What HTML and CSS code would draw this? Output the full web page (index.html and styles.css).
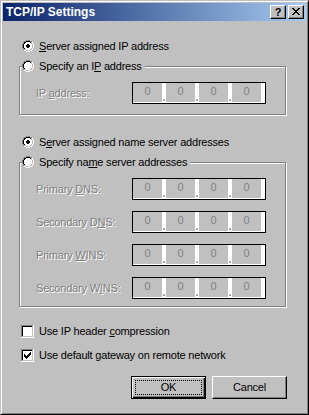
FILE: index.html
```html
<!DOCTYPE html>
<html>
<head>
<meta charset="utf-8">
<title>TCP/IP Settings</title>
<link rel="stylesheet" href="styles.css">
</head>
<body>
<svg class="defs" xmlns="http://www.w3.org/2000/svg">
  <symbol id="rb" viewBox="0 0 12 12">
    <path fill="#fff" d="M4 2h4v1H4zM3 3h6v1H3zM2 4h8v4H2zM3 8h6v1H3zM4 9h4v1H4z"/>
    <path fill="#808080" d="M4 0h4v1H4zM2 1h2v1H2zM8 1h2v1H8zM1 2h1v2H1zM0 4h1v4H0zM1 8h1v2H1z"/>
    <path fill="#fff" d="M10 2h1v2h-1zM11 4h1v4h-1zM10 8h1v2h-1zM2 10h2v1H2zM8 10h2v1H8zM4 11h4v1H4z"/>
    <path fill="#000" d="M4 1h4v1H4zM2 2h2v1H2zM8 2h1v1H8zM2 3h1v1H2zM1 4h1v4H1zM2 8h1v1H2z"/>
    <path fill="#c0c0c0" d="M9 2h1v2H9zM10 4h1v4h-1zM9 8h1v1H9zM2 9h2v1H2zM8 9h2v1H8zM4 10h4v1H4z"/>
  </symbol>
  <symbol id="rbon" viewBox="0 0 12 12">
    <use href="#rb" width="12" height="12"/>
    <path fill="#000" d="M5 4h2v1H5zM4 5h4v2H4zM5 7h2v1H5z"/>
  </symbol>
  <symbol id="cb" viewBox="0 0 13 13">
    <rect width="13" height="13" fill="#fff"/>
    <path fill="#808080" d="M0 0h12v1H1v11H0z"/>
    <path fill="#000" d="M1 1h10v1H2v9H1z"/>
    <path fill="#c0c0c0" d="M11 1h1v11H1v-1h10z"/>
  </symbol>
</svg>

<div class="window">
  <div class="titlebar">
    <span class="title">TCP/IP Settings</span>
    <div class="cbtns">
      <span class="cbtn help">?</span>
      <span class="cbtn close">
        <svg width="8" height="7" viewBox="0 0 8 7" shape-rendering="crispEdges"><path fill="#000" d="M0 0h2v1H0zM6 0h2v1H6zM1 1h2v1H1zM5 1h2v1H5zM2 2h4v1H2zM3 3h2v1H3zM2 4h4v1H2zM1 5h2v1H1zM5 5h2v1H5zM0 6h2v1H0zM6 6h2v1H6z"/></svg>
      </span>
    </div>
  </div>

  <div class="content">
    <div class="opt r1">
      <svg class="radio" viewBox="0 0 12 12" shape-rendering="crispEdges"><use href="#rbon" width="12" height="12"/></svg>
      <span><u>S</u>erver assigned IP address</span>
    </div>

    <div class="group g1">
      <div class="legend">
        <svg class="radio" viewBox="0 0 12 12" shape-rendering="crispEdges"><use href="#rb" width="12" height="12"/></svg>
        <span>Specify an I<u>P</u> address</span>
      </div>
      <div class="field">
        <span class="lbl disabled">IP <u>a</u>ddress:</span>
        <div class="ip"><span class="seg">0</span><span class="dot">.</span><span class="seg">0</span><span class="dot">.</span><span class="seg">0</span><span class="dot">.</span><span class="seg">0</span></div>
      </div>
    </div>

    <div class="opt r3">
      <svg class="radio" viewBox="0 0 12 12" shape-rendering="crispEdges"><use href="#rbon" width="12" height="12"/></svg>
      <span>S<u>e</u>rver assigned name server addresses</span>
    </div>

    <div class="group g2">
      <div class="legend">
        <svg class="radio" viewBox="0 0 12 12" shape-rendering="crispEdges"><use href="#rb" width="12" height="12"/></svg>
        <span>Specify na<u>m</u>e server addresses</span>
      </div>
      <div class="field">
        <span class="lbl disabled">Primary <u>D</u>NS:</span>
        <div class="ip"><span class="seg">0</span><span class="dot">.</span><span class="seg">0</span><span class="dot">.</span><span class="seg">0</span><span class="dot">.</span><span class="seg">0</span></div>
      </div>
      <div class="field">
        <span class="lbl disabled">Secondary D<u>N</u>S:</span>
        <div class="ip"><span class="seg">0</span><span class="dot">.</span><span class="seg">0</span><span class="dot">.</span><span class="seg">0</span><span class="dot">.</span><span class="seg">0</span></div>
      </div>
      <div class="field">
        <span class="lbl disabled">Primary <u>W</u>INS:</span>
        <div class="ip"><span class="seg">0</span><span class="dot">.</span><span class="seg">0</span><span class="dot">.</span><span class="seg">0</span><span class="dot">.</span><span class="seg">0</span></div>
      </div>
      <div class="field">
        <span class="lbl disabled">Secondary W<u>I</u>NS:</span>
        <div class="ip"><span class="seg">0</span><span class="dot">.</span><span class="seg">0</span><span class="dot">.</span><span class="seg">0</span><span class="dot">.</span><span class="seg">0</span></div>
      </div>
    </div>

    <div class="chk c1">
      <svg class="checkbox" viewBox="0 0 13 13" shape-rendering="crispEdges"><use href="#cb" width="13" height="13"/></svg>
      <span>Use IP header <u>c</u>ompression</span>
    </div>
    <div class="chk c2">
      <svg class="checkbox" viewBox="0 0 13 13" shape-rendering="crispEdges"><use href="#cb" width="13" height="13"/><path fill="#000" d="M3 5h1v3H3zM4 6h1v3H4zM5 7h1v3H5zM6 6h1v3H6zM7 5h1v3H7zM8 4h1v3H8zM9 3h1v3H9z"/></svg>
      <span>Use default gateway on remote network</span>
    </div>

    <div class="buttons">
      <div class="btn default"><span class="focus">OK</span></div>
      <div class="btn">Cancel</div>
    </div>
  </div>
</div>
</body>
</html>
```

FILE: styles.css
```css
* { box-sizing: border-box; margin: 0; padding: 0; }

html, body { width: 309px; height: 415px; overflow: hidden; }

body {
  background: #c0c0c0;
  font-family: "Liberation Sans", Arial, sans-serif;
  font-size: 11px;
  line-height: 13px;
  letter-spacing: -0.2px;
  color: #000;
}

.defs { display: block; width: 0; height: 0; overflow: hidden; }

u { text-decoration-thickness: 1px; text-underline-offset: 1px; }

.window {
  width: 309px;
  height: 415px;
  background: #c0c0c0;
  border: 1px solid;
  border-color: #c0c0c0 #000 #000 #c0c0c0;
  box-shadow: inset 1px 1px #fff, inset -1px -1px #808080;
  padding: 2px;
  display: flex;
  flex-direction: column;
}

.titlebar {
  height: 18px;
  flex: none;
  display: flex;
  align-items: center;
  justify-content: space-between;
  padding: 0 2px 0 3px;
  background: linear-gradient(to right, #0a246a, #a6caf0);
}

.title { color: #fff; font-weight: bold; font-size: 12px; line-height: 14px; letter-spacing: 0; }

.cbtns { display: flex; gap: 2px; }

.cbtn {
  width: 16px;
  height: 14px;
  background: #c0c0c0;
  border: 1px solid;
  border-color: #fff #000 #000 #fff;
  box-shadow: inset -1px -1px #808080;
  display: flex;
  justify-content: center;
}

.help { font-weight: bold; font-size: 11px; line-height: 12px; align-items: center; letter-spacing: 0; }
.close { align-items: flex-start; padding-top: 2px; }
.close svg { display: block; }

.content { display: flex; flex-direction: column; padding-left: 16px; }

.opt { display: flex; align-items: center; gap: 5px; height: 12px; margin-left: 3px; }
.r1 { margin-top: 19px; }
.r3 { margin-top: 21px; }

.radio { width: 12px; height: 12px; flex: none; display: block; }

.group {
  width: 267px;
  margin-top: 14px;
  border: 1px solid #808080;
  box-shadow: inset 1px 1px #fff, 1px 1px #fff;
  display: flex;
  flex-direction: column;
}
.g1 { padding-bottom: 10px; }
.g2 { padding-bottom: 7px; }

.legend {
  display: flex;
  align-items: center;
  gap: 5px;
  height: 12px;
  margin: -7px 0 0 2px;
  padding-right: 3px;
  background: #c0c0c0;
  align-self: flex-start;
}

.field { display: flex; align-items: center; height: 22px; margin: 11px 0 0 16px; }
.legend + .field { margin-top: 10px; }

.lbl { width: 96px; }
.disabled { color: #808080; text-shadow: 1px 1px 0 #fff; }

.ip {
  width: 134px;
  height: 22px;
  display: flex;
  background: #fff;
  border: 1px solid #000;
  padding: 0 4px 1px 0;
}

.seg { width: 29px; background: #c0c0c0; color: #808080; text-align: center; padding-top: 2px; }

.dot {
  width: 4px;
  color: #808080;
  font-weight: bold;
  text-align: center;
  padding-top: 8px;
  line-height: 13px;
  letter-spacing: 0;
}

.chk { display: flex; align-items: center; gap: 5px; height: 13px; margin-left: 2px; }
.c1 { margin-top: 18px; }
.c2 { margin-top: 11px; }

.checkbox { width: 13px; height: 13px; flex: none; display: block; }

.buttons { display: flex; justify-content: flex-end; gap: 6px; width: 268px; margin-top: 14px; }

.btn {
  width: 75px;
  height: 23px;
  background: #c0c0c0;
  border: 1px solid;
  border-color: #fff #000 #000 #fff;
  box-shadow: inset -1px -1px #808080;
  display: flex;
  align-items: center;
  justify-content: center;
}

.btn.default {
  border-color: #000;
  box-shadow: inset 1px 1px #fff, inset -1px -1px #000, inset -2px -2px #808080;
  padding: 3px;
  align-items: stretch;
}

.focus {
  flex: 1;
  border: 1px dotted #000;
  display: flex;
  align-items: center;
  justify-content: center;
}
```
